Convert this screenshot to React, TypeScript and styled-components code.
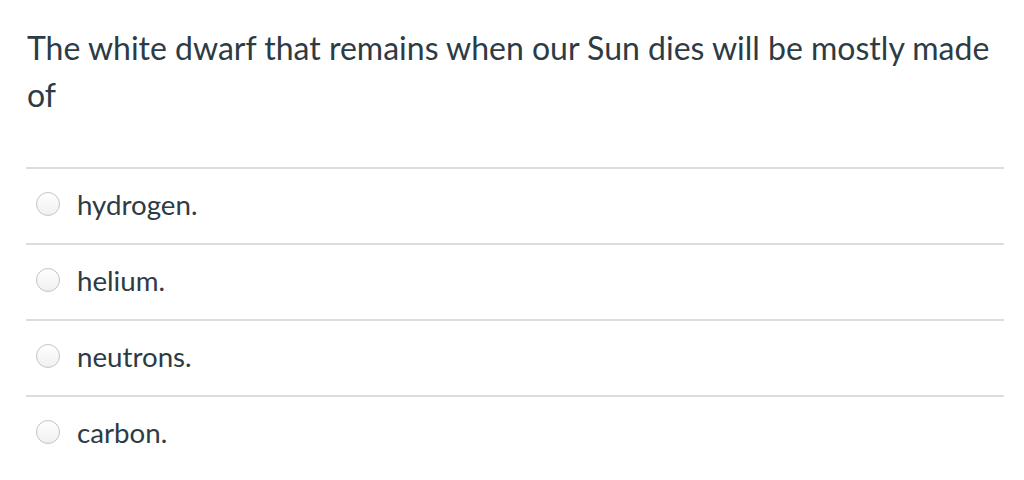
import React from 'react';
import styled, { createGlobalStyle } from 'styled-components';

const GlobalStyle = createGlobalStyle`
   body {
      margin: 0;
      background: #ffffff;
      font-family: Lato, "Open Sans", sans-serif;
      color: #2d3b45;
   }
`;

const answers = ['hydrogen.', 'helium.', 'neutrons.', 'carbon.'];

const App = () => {
   return (
      <>
         <GlobalStyle />
         <Quiz>
            <Question>
               The white dwarf that remains when our Sun dies will be mostly made of
            </Question>
            <AnswerList>
               {answers.map((a) => (
                  <Answer key={a}>
                     <Radio type="radio" name="q1" />
                     <Label>{a}</Label>
                  </Answer>
               ))}
            </AnswerList>
         </Quiz>
      </>
   );
};

export default App;

const Quiz = styled.div`
   width: 978px;
   padding: 24px 0 0 26px;
`;
const Question = styled.p`
   margin: 0 0 49px 0;
   padding-left: 1px;
   font-size: 32px;
   line-height: 47px;
   color: #2d3b45;
`;
const AnswerList = styled.div`
   display: flex;
   flex-direction: column;
`;
const Answer = styled.label`
   display: flex;
   align-items: center;
   height: 70px;
   padding: 0 0 4px 10px;
   border-top: 2px solid #dddddd;
`;
const Radio = styled.input`
   appearance: none;
   width: 24px;
   height: 24px;
   margin: 0 17px 0 0;
   border-radius: 50%;
   border: 1px solid #c4c4c4;
   background: linear-gradient(#ffffff, #f0f0f0);
   box-sizing: border-box;
`;
const Label = styled.span`
   font-size: 27.7px;
   color: #2d3b45;
`;
